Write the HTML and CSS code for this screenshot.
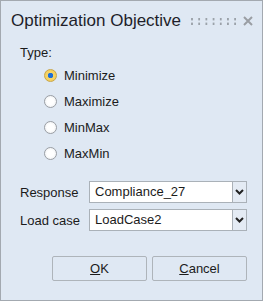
FILE: index.html
```html
<!DOCTYPE html>
<html>
<head>
  <meta charset="UTF-8">
  <title>Optimization Objective</title>
  <link rel="stylesheet" href="styles.css">
</head>
<body>
  <div class="dialog">

    <div class="titlebar">
      <span class="title">Optimization Objective</span>
      <span class="grip"></span>
      <svg class="close" width="10" height="10" viewBox="0 0 10 10">
        <path d="M1 1 L9 9 M9 1 L1 9" stroke="#9a9ea3" stroke-width="2"/>
      </svg>
    </div>

    <div class="type-label">Type:</div>

    <div class="radios">
      <div class="radio-row"><span class="radio checked"></span>Minimize</div>
      <div class="radio-row"><span class="radio"></span>Maximize</div>
      <div class="radio-row"><span class="radio"></span>MinMax</div>
      <div class="radio-row"><span class="radio"></span>MaxMin</div>
    </div>

    <div class="fields">
      <span class="field-label">Response</span>
      <div class="combo">
        <span class="combo-text">Compliance_27</span>
        <span class="combo-arrow">
          <svg width="9" height="6" viewBox="0 0 9 6"><path d="M1 1 L4.5 4.5 L8 1" fill="none" stroke="#222" stroke-width="2"/></svg>
        </span>
      </div>

      <span class="field-label">Load case</span>
      <div class="combo">
        <span class="combo-text">LoadCase2</span>
        <span class="combo-arrow">
          <svg width="9" height="6" viewBox="0 0 9 6"><path d="M1 1 L4.5 4.5 L8 1" fill="none" stroke="#222" stroke-width="2"/></svg>
        </span>
      </div>
    </div>

    <div class="buttons">
      <button class="btn"><u>O</u>K</button>
      <button class="btn"><u>C</u>ancel</button>
    </div>

  </div>
</body>
</html>
```

FILE: styles.css
```css
/* page */
body {
  margin: 0;
  background: #ffffff;
  font-family: "Liberation Sans", Arial, sans-serif;
  font-size: 13px;
  color: #1b1b1b;
}

/* dialog frame */
.dialog {
  width: 263px;
  height: 301px;
  box-sizing: border-box;
  border: 1px solid #a3a9b0;
  background: #dfe8f3;
}

/* title row */
.titlebar {
  height: 39px;
  display: flex;
  align-items: center;
  padding-left: 10px;
}

.title {
  font-size: 17px;
  color: #1e1e2a;
  margin-top: 1px;
}

.grip {
  width: 45px;
  height: 7px;
  margin-left: 10px;
  margin-top: 2px;
  background-image: radial-gradient(circle, #8e949b 1px, transparent 1.3px);
  background-size: 7.2px 5px;
  background-position: -2.6px -1.5px;
}

.close {
  margin-left: 7px;
}

/* type block */
.type-label {
  margin-top: 4px;
  padding-left: 19px;
  line-height: 18px;
}

.radios {
  padding-left: 43px;
}

.radio-row {
  height: 26px;
  display: flex;
  align-items: center;
}

.radio {
  width: 13px;
  height: 13px;
  box-sizing: border-box;
  border: 1px solid #9a9ea4;
  border-radius: 50%;
  background: radial-gradient(circle, #ffffff 40%, #e8ebee 100%);
  margin-right: 7px;
}

.radio.checked {
  border-color: #c9a649;
  background: radial-gradient(circle, #1f6fd6 0, #1f6fd6 2.5px, #f6d56a 3px, #f2c94c 100%);
}

/* response / load case */
.fields {
  margin-top: 15px;
  padding-left: 19px;
  display: grid;
  grid-template-columns: 69px 158px;
  row-gap: 6px;
  align-items: center;
}

.combo {
  display: flex;
  height: 22px;
}

.combo-text {
  flex: 1;
  background: #ffffff;
  border: 1px solid #aab1b8;
  padding-left: 5px;
  line-height: 20px;
}

.combo-arrow {
  width: 13px;
  border: 1px solid #aab1b8;
  border-left: none;
  background: #e4ebf4;
  display: flex;
  align-items: center;
  justify-content: center;
}

/* bottom buttons */
.buttons {
  margin-top: 25px;
  padding-right: 15px;
  display: flex;
  justify-content: flex-end;
  gap: 5px;
}

.btn {
  width: 95px;
  height: 25px;
  border: 1px solid #aeb4ba;
  border-radius: 2px;
  background: #dfe8f3;
  font-family: "Liberation Sans", Arial, sans-serif;
  font-size: 13px;
  color: #1b1b1b;
  padding: 0;
}
```
